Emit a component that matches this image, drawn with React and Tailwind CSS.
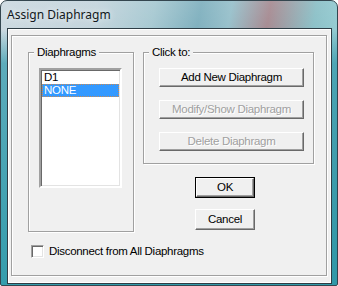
import React from "react";

const btn3d =
  "border border-t-white border-l-white border-r-[#696969] border-b-[#696969] shadow-[inset_-1px_-1px_0_#a0a0a0] bg-[#f0f0f0] flex items-center justify-center";

function Btn({ children, disabled, className = "" }) {
  return (
    <div
      className={`${btn3d} ${className} ${
        disabled ? "text-[#a0a0a0] [text-shadow:1px_1px_0_#ffffff]" : "text-black"
      }`}
    >
      <span className="leading-none">{children}</span>
    </div>
  );
}

function Group({ label, className = "", children }) {
  return (
    <div
      className={`relative border border-[#a0a0a0] shadow-[inset_1px_1px_0_#ffffff,1px_1px_0_#ffffff] ${className}`}
    >
      <div className="absolute left-[5px] top-[-8px] bg-[#f0f0f0] px-[3px] leading-[14px] text-black">
        {label}
      </div>
      {children}
    </div>
  );
}

export default function App() {
  return (
    <div className="w-[338px] h-[286px] bg-white font-['Liberation_Sans',Arial,sans-serif] text-[11.5px] tracking-[-0.3px]">
      <div className="w-[338px] h-[286px] rounded-t-[7px] rounded-b-[2px] border border-[#34464f] flex flex-col bg-[linear-gradient(180deg,rgba(60,160,178,0)_0%,rgba(60,160,178,0)_10%,rgba(58,158,176,0.75)_22%,rgba(44,154,170,0.95)_100%),linear-gradient(180deg,rgba(255,255,255,0.18)_0%,rgba(255,255,255,0)_30%),linear-gradient(100deg,#c6d5dd_0%,#bccfd8_25%,#9cc2cc_40%,#6fa6b6_52%,#8ab8c4_60%,#9b7c84_70%,#7db8c0_82%,#86c4cb_88%,#767b82_100%)]">
        <div className="h-[27px] flex items-center pl-[6px] shrink-0">
          <span className="font-['Noto_Sans',sans-serif] text-[12px] tracking-normal text-[#111820] [text-shadow:0_0_6px_rgba(255,255,255,0.9)] leading-none">
            Assign Diaphragm
          </span>
        </div>
        <div className="ml-[6px] mr-[5px] mb-[1px] flex-1 border border-[#2e3d45] bg-[#f0f0f0] shadow-[inset_1px_1px_0_#ffffff,inset_-1px_-1px_0_#ffffff] pl-[3px] pr-[3px] pt-[6px] pb-[6px] flex">
          <div className="flex-1 mr-[1px] mb-[1px] border border-[#a0a0a0] shadow-[inset_1px_1px_0_#ffffff,1px_1px_0_#ffffff] flex flex-col">
            <div className="flex mt-[16px]">
              <Group label="Diaphragms" className="ml-[16px] w-[106px] h-[180px]">
                <div className="ml-[10px] mt-[15px] w-[83px] h-[120px] bg-white border-2 border-t-[#a0a0a0] border-l-[#a0a0a0] border-r-white border-b-white shadow-[inset_1px_1px_0_#696969,inset_-1px_-1px_0_#e3e3e3] pt-[1px] pl-[1px] pr-[1px]">
                  <div className="h-[13px] pl-[2px] flex items-center text-black leading-none">D1</div>
                  <div className="h-[13px] pl-[2px] flex items-center bg-[#3399ff] text-white leading-none outline-1 outline-dotted outline-[#c98a55] -outline-offset-1">
                    NONE
                  </div>
                </div>
              </Group>
              <div className="ml-[9px] flex flex-col">
                <Group label="Click to:" className="w-[171px] h-[112px]">
                  <div className="ml-[15px] mt-[15px] flex flex-col gap-[13px]">
                    <Btn className="w-[145px] h-[19px]">Add New Diaphragm</Btn>
                    <Btn disabled className="w-[145px] h-[19px]">Modify/Show Diaphragm</Btn>
                    <Btn disabled className="w-[145px] h-[19px]">Delete Diaphragm</Btn>
                  </div>
                </Group>
                <div className="ml-[52px] mt-[13px] w-[60px] h-[21px] border border-black">
                  <Btn className="w-full h-full">OK</Btn>
                </div>
                <Btn className="ml-[52px] mt-[11px] w-[60px] h-[21px]">Cancel</Btn>
              </div>
            </div>
            <div className="flex items-center mt-[13px] ml-[19px] gap-[5px]">
              <div className="w-[13px] h-[13px] bg-white border border-t-[#a0a0a0] border-l-[#a0a0a0] border-r-white border-b-white shadow-[inset_1px_1px_0_#696969,inset_-1px_-1px_0_#e3e3e3]" />
              <span className="text-black leading-none">Disconnect from All Diaphragms</span>
            </div>
          </div>
        </div>
      </div>
    </div>
  );
}
